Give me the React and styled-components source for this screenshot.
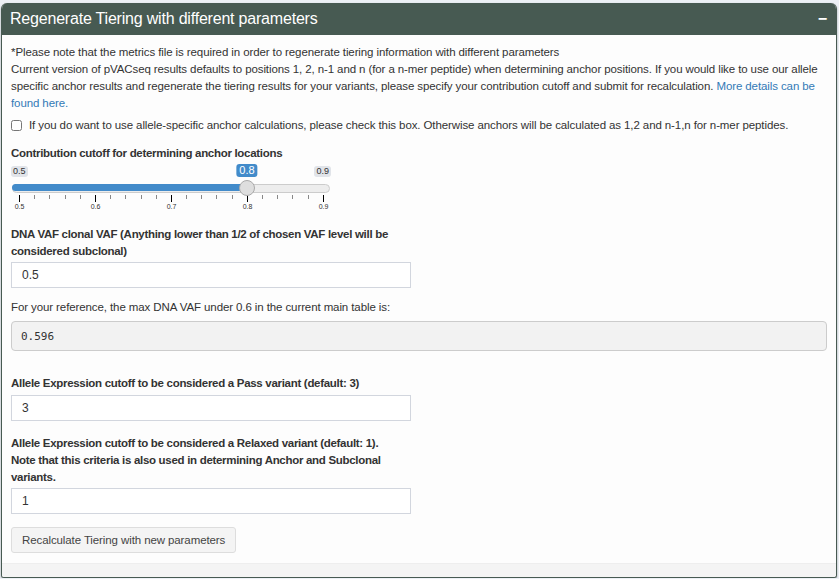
import React from "react"
import styled, { createGlobalStyle } from "styled-components"

const Global = createGlobalStyle`
  html, body {
    margin: 0;
    padding: 0;
    background: #ecf0f5;
  }
  body {
    font-family: "Liberation Sans", Arial, sans-serif;
    font-size: 11.5px;
    letter-spacing: -0.1px;
    color: #333;
  }
`

const Page = styled.div`
  padding: 3px 2px 0 1px;
`

const Box = styled.section`
  background: #fdfdfd;
  border: 1px solid #475a52;
  border-top: none;
  border-radius: 6px 6px 3px 3px;
  box-shadow: 0 1px 2px rgba(0, 0, 0, 0.35);
  overflow: hidden;
`

const Header = styled.header`
  height: 32px;
  background: #475a52;
  color: #fff;
  display: flex;
  align-items: center;
  justify-content: space-between;
  padding: 0 10px 0 9px;
  margin: 0 -1px;
`

const Title = styled.h3`
  margin: 0;
  font-size: 16px;
  font-weight: normal;
  letter-spacing: -0.2px;
`

const Collapse = styled.span`
  font-size: 16px;
  font-weight: bold;
  line-height: 1;
`

const Body = styled.div`
  display: flex;
  flex-direction: column;
  align-items: flex-start;
  padding: 9px 9px 10px 9px;
`

const Para = styled.p`
  margin: ${(p) => p.$top || 0}px 0 0;
  line-height: 17px;
`

const Link = styled.a`
  color: #337ab7;
  text-decoration: none;
`

const CheckRow = styled.label`
  display: flex;
  align-items: center;
  gap: 7px;
  margin-top: 5px;
  line-height: 17px;
`

const Check = styled.input`
  width: 11px;
  height: 11px;
  margin: 0;
`

const FieldLabel = styled.div`
  font-weight: bold;
  letter-spacing: -0.3px;
  line-height: 17px;
  margin-top: ${(p) => p.$top || 0}px;
`

const Slider = styled.div`
  display: flex;
  flex-direction: column;
  width: 320px;
  margin-top: 2px;
`

const TagRow = styled.div`
  position: relative;
  display: flex;
  justify-content: space-between;
  align-items: center;
  height: 14px;
`

const Tag = styled.span`
  font-size: 9px;
  line-height: 11px;
  padding: 0 2px;
  border-radius: 3px;
  background: #e1e4e9;
  color: #333;
  letter-spacing: 0;
`

const ActiveTag = styled(Tag)`
  position: absolute;
  top: 0;
  font-size: 11px;
  line-height: 13px;
  padding: 0 3px;
  background: #428bca;
  color: #fff;
  transform: translateX(-50%);
`

const Track = styled.div`
  position: relative;
  height: 7px;
  margin: 6px 1px 0;
  background: #ededed;
  border: 1px solid #ccc;
  border-radius: 5px;
`

const Fill = styled.div`
  height: 7px;
  margin: -1px;
  background: #428bca;
  border-radius: 5px 0 0 5px;
`

const Handle = styled.div`
  position: absolute;
  top: -5px;
  width: 16px;
  height: 16px;
  border-radius: 50%;
  background: #dedede;
  border: 1px solid #aaa;
  box-sizing: border-box;
  transform: translateX(-50%);
`

const TickRow = styled.div`
  display: flex;
  justify-content: space-between;
  align-items: flex-start;
  height: 7px;
  padding: 0 7px 0 8px;
  margin-top: 2px;
`

const Tick = styled.div`
  width: 1px;
  height: ${(p) => (p.$major ? 7 : 4)}px;
  background: ${(p) => (p.$major ? "#000" : "#888")};
`

const GridRow = styled.div`
  display: flex;
  justify-content: space-between;
  padding: 0 7px 0 8px;
  font-size: 7px;
  line-height: 9px;
  letter-spacing: 0;
  color: #333;
`

const GridMark = styled.span`
  width: 1px;
  display: flex;
  justify-content: center;
  white-space: nowrap;
`

const TextInput = styled.input`
  display: block;
  box-sizing: border-box;
  width: 400px;
  height: 26px;
  margin-top: ${(p) => p.$top || 0}px;
  padding: 0 10px;
  border: 1px solid #d2d6de;
  background: #fff;
  font-family: "Liberation Sans", Arial, sans-serif;
  font-size: 12px;
  color: #333;
  outline: none;
`

const Pre = styled.pre`
  align-self: stretch;
  margin: 5px 0 0;
  height: 30px;
  box-sizing: border-box;
  padding: 0 9px;
  display: flex;
  align-items: center;
  background: #f2f2f2;
  border: 1px solid #ccc;
  border-radius: 4px;
  font-family: "DejaVu Sans Mono", "Liberation Mono", monospace;
  font-size: 11px;
  letter-spacing: 0;
  color: #333;
`

const Button = styled.button`
  margin-top: 13px;
  height: 26px;
  padding: 0 10px;
  background: #f4f4f4;
  border: 1px solid #ddd;
  border-radius: 3px;
  font-family: "Liberation Sans", Arial, sans-serif;
  font-size: 11.5px;
  letter-spacing: -0.1px;
  color: #444;
`

const Footer = styled.div`
  height: 13px;
  background: #f4f4f4;
  border-top: 1px solid #eee;
`

const ticks = Array.from({ length: 21 }, (_, i) => i)
const grid = ["0.5", "0.6", "0.7", "0.8", "0.9"]
const value = 0.8
const handleX = 8 + ((value - 0.5) / 0.4) * 304

export default function App() {
  return (
    <>
      <Global />
      <Page>
        <Box>
          <Header>
            <Title>Regenerate Tiering with different parameters</Title>
            <Collapse>−</Collapse>
          </Header>
          <Body>
            <Para>
              *Please note that the metrics file is required in order to regenerate tiering information with different parameters
              <br />
              Current version of pVACseq results defaults to positions 1, 2, n-1 and n (for a n-mer peptide) when determining anchor positions. If you would like to use our allele specific anchor results and regenerate the tiering results for your variants, please specify your contribution cutoff and submit for recalculation.{" "}
              <Link href="#">More details can be found here.</Link>
            </Para>
            <CheckRow>
              <Check type="checkbox" />
              If you do want to use allele-specific anchor calculations, please check this box. Otherwise anchors will be calculated as 1,2 and n-1,n for n-mer peptides.
            </CheckRow>
            <FieldLabel $top={11}>Contribution cutoff for determining anchor locations</FieldLabel>
            <Slider>
              <TagRow>
                <Tag>0.5</Tag>
                <ActiveTag style={{ left: handleX }}>0.8</ActiveTag>
                <Tag>0.9</Tag>
              </TagRow>
              <Track>
                <Fill style={{ width: handleX - 1 }} />
                <Handle style={{ left: handleX - 2 }} />
              </Track>
              <TickRow>
                {ticks.map((i) => (
                  <Tick key={i} $major={i % 5 === 0} />
                ))}
              </TickRow>
              <GridRow>
                {grid.map((g) => (
                  <GridMark key={g}>{g}</GridMark>
                ))}
              </GridRow>
            </Slider>
            <FieldLabel $top={15}>
              DNA VAF clonal VAF (Anything lower than 1/2 of chosen VAF level will be
              <br />
              considered subclonal)
            </FieldLabel>
            <TextInput $top={2} defaultValue="0.5" />
            <Para $top={11}>For your reference, the max DNA VAF under 0.6 in the current main table is:</Para>
            <Pre>0.596</Pre>
            <FieldLabel $top={24}>Allele Expression cutoff to be considered a Pass variant (default: 3)</FieldLabel>
            <TextInput $top={3} defaultValue="3" />
            <FieldLabel $top={14}>
              Allele Expression cutoff to be considered a Relaxed variant (default: 1).
              <br />
              Note that this criteria is also used in determining Anchor and Subclonal
              <br />
              variants.
            </FieldLabel>
            <TextInput $top={2} defaultValue="1" />
            <Button>Recalculate Tiering with new parameters</Button>
          </Body>
          <Footer />
        </Box>
      </Page>
    </>
  )
}
